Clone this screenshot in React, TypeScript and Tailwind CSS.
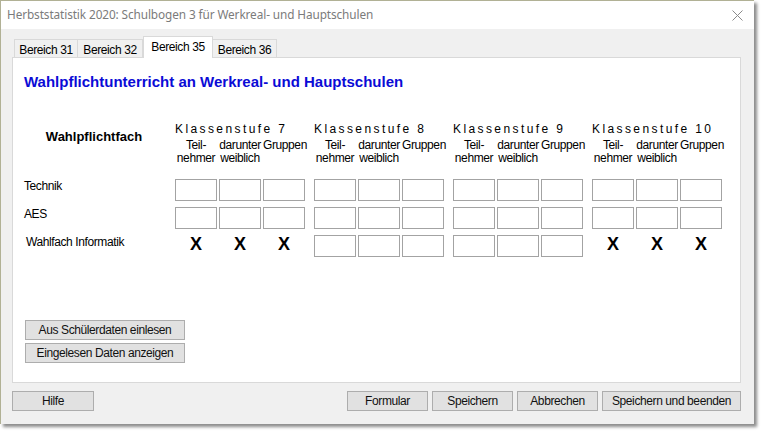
import React from 'react';

const GROUPS = ['7', '8', '9', '10'];

const ROWS: { label: string; crossed: string[]; indent?: boolean }[] = [
  { label: 'Technik', crossed: [] },
  { label: 'AES', crossed: [] },
  { label: 'Wahlfach Informatik', crossed: ['7', '10'], indent: true },
];

const TABS = [
  { name: 'Bereich 31', w: 'w-[64px] border-l' },
  { name: 'Bereich 32', w: 'w-[65px]' },
  { name: 'Bereich 35', w: 'w-[70px] border-l', active: true },
  { name: 'Bereich 36', w: 'w-[64px]' },
];

const font = { fontFamily: '"Liberation Sans", Arial, sans-serif' };

function Btn({ label, className }: { label: string; className: string }) {
  return (
    <button
      className={`h-[20px] bg-[#e1e1e1] border border-[#adadad] text-[12px] tracking-[-0.4px] leading-none text-[#111] ${className}`}
    >
      {label}
    </button>
  );
}

function Box() {
  return <div className="w-[42px] h-[22px] bg-white border border-[#a3a3a3]" />;
}

function Cross() {
  return (
    <div className="w-[42px] h-[22px] flex justify-center items-start">
      <span className="text-[18px] font-bold leading-[18px] text-black">X</span>
    </div>
  );
}

export default function App() {
  return (
    <div className="w-[762px] h-[433px] bg-white overflow-hidden" style={font}>
      <div className="w-[754px] h-[424px] flex flex-col border-l border-t border-[#b1b195] shadow-[3px_3px_3px_rgba(0,0,0,0.45)]">
        {/* title bar */}
        <div className="h-[28px] bg-white flex items-center justify-between pl-[6px] pr-[11px]">
          <span
            className="text-[11.8px] tracking-[-0.1px] text-[#7b7b7b]"
            style={{ fontFamily: '"Noto Sans", "Open Sans", sans-serif' }}
          >
            Herbststatistik 2020: Schulbogen 3 für Werkreal- und Hauptschulen
          </span>
          <svg width="11" height="11" viewBox="0 0 11 11" className="mt-[1px]">
            <path d="M0.5 0.5 L10.5 10.5 M10.5 0.5 L0.5 10.5" stroke="#8a8a8a" strokeWidth="1" fill="none" />
          </svg>
        </div>

        {/* body */}
        <div className="flex-1 bg-[#f0f0f0] pl-[11px] pt-[7px] flex flex-col">
          {/* tabs */}
          <div className="flex items-end h-[22px] -mb-[1px] pl-[2px] relative z-10">
            {TABS.map(t =>
              t.active ? (
                <div
                  key={t.name}
                  className={`${t.w} h-[22px] bg-white border-t border-r border-[#d9d9d9] text-center pt-[4px] text-[12px] tracking-[-0.4px] leading-[13px] text-black`}
                >
                  {t.name}
                </div>
              ) : (
                <div
                  key={t.name}
                  className={`${t.w} h-[19px] bg-[#f0f0f0] border-t border-r border-b border-[#d9d9d9] text-center pt-[4px] text-[12px] tracking-[-0.4px] leading-[13px] text-black`}
                >
                  {t.name}
                </div>
              )
            )}
          </div>

          {/* panel */}
          <div className="w-[729px] h-[326px] bg-white border border-[#d9d9d9] flex flex-col">
            <h1 className="pl-[11px] mt-[16px] text-[15px] font-bold leading-[16px] text-[#0b0bd6]">
              Wahlpflichtunterricht an Werkreal- und Hauptschulen
            </h1>

            {/* header */}
            <div className="flex mt-[31px] text-black">
              <div className="w-[162px] pt-[9px] text-center text-[13px] font-bold leading-[14px]">Wahlpflichtfach</div>
              <div className="flex gap-[9px]">
                {GROUPS.map(g => (
                  <div key={g} className="w-[130px] flex flex-col">
                    <div className="text-[12px] tracking-[2.4px] leading-[16px] whitespace-nowrap">Klassenstufe {g}</div>
                    <div className="flex gap-[2px] mt-[2px] text-[12px] tracking-[-0.4px] leading-[13px]">
                      <div className="w-[42px] text-center">
                        Teil-
                        <br />
                        nehmer
                      </div>
                      <div className="w-[42px] text-center whitespace-nowrap">
                        darunter
                        <br />
                        weiblich
                      </div>
                      <div className="w-[42px] text-center whitespace-nowrap">Gruppen</div>
                    </div>
                  </div>
                ))}
              </div>
            </div>

            {/* rows */}
            <div className="flex flex-col gap-[6px] mt-[14px]">
              {ROWS.map(r => (
                <div key={r.label} className="flex items-start h-[22px]">
                  <div
                    className={`w-[162px] pt-[1px] text-[12px] tracking-[-0.4px] leading-[13px] text-black ${r.indent ? 'pl-[13px]' : 'pl-[11px]'}`}
                  >
                    {r.label}
                  </div>
                  <div className="flex gap-[9px]">
                    {GROUPS.map(g => (
                      <div key={g} className="w-[130px] flex gap-[2px]">
                        {r.crossed.includes(g) ? (
                          <>
                            <Cross />
                            <Cross />
                            <Cross />
                          </>
                        ) : (
                          <>
                            <Box />
                            <Box />
                            <Box />
                          </>
                        )}
                      </div>
                    ))}
                  </div>
                </div>
              ))}
            </div>

            {/* import buttons */}
            <div className="flex flex-col gap-[3px] mt-[63px] ml-[12px]">
              <Btn label="Aus Schülerdaten einlesen" className="w-[160px] h-[19px]" />
              <Btn label="Eingelesen Daten anzeigen" className="w-[160px] h-[19px]" />
            </div>
          </div>

          {/* bottom buttons */}
          <div className="w-[729px] flex mt-[8px]">
            <Btn label="Hilfe" className="w-[82px]" />
            <div className="ml-auto flex gap-[4px]">
              <Btn label="Formular" className="w-[81px]" />
              <Btn label="Speichern" className="w-[81px]" />
              <Btn label="Abbrechen" className="w-[81px]" />
              <Btn label="Speichern und beenden" className="w-[139px]" />
            </div>
          </div>
        </div>
      </div>
    </div>
  );
}
